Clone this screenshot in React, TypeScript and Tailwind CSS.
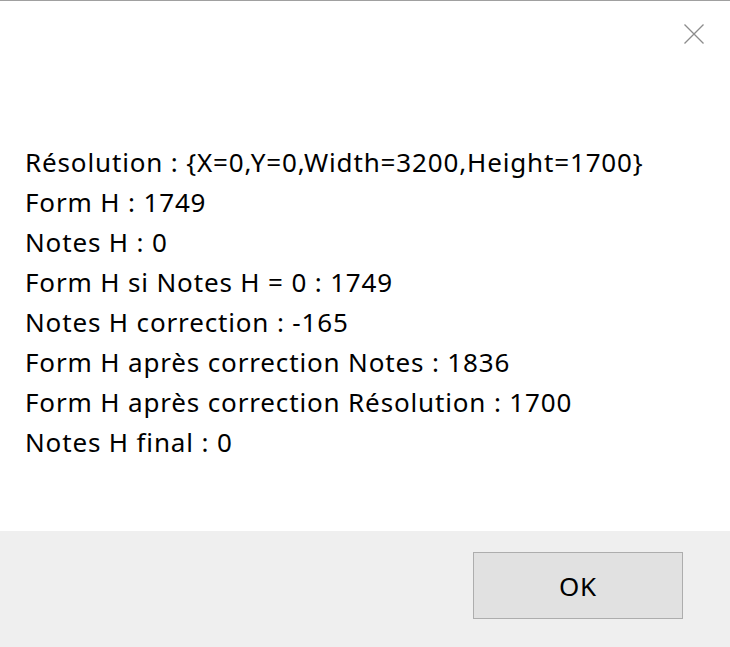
const lines = [
    'Résolution : {X=0,Y=0,Width=3200,Height=1700}',
    'Form H : 1749',
    'Notes H : 0',
    'Form H si Notes H = 0 : 1749',
    'Notes H correction : -165',
    'Form H après correction Notes : 1836',
    'Form H après correction Résolution : 1700',
    'Notes H final : 0',
];

export default function App() {
    return (
        <div className="w-[730px] h-[647px] flex flex-col bg-white border-t border-[#a0a0a0] overflow-hidden" style={{ fontFamily: '"Noto Sans", "Open Sans", sans-serif' }}>
            <div className="h-[530px] flex flex-col">
                <div className="h-[141px] flex justify-end items-start pt-[23px] pr-[26px]">
                    <svg width="20" height="20" viewBox="0 0 20 20" className="text-[#8c8c8c]">
                        <path d="M0.5 0.5 L19.5 19.5 M19.5 0.5 L0.5 19.5" stroke="currentColor" strokeWidth="1.3" fill="none" />
                    </svg>
                </div>
                <div className="pl-[25px] flex flex-col text-[26px] leading-[40px] text-black tracking-[0.85px]">
                    {lines.map((l) => (
                        <p key={l}>{l}</p>
                    ))}
                </div>
            </div>
            <div className="flex-1 bg-[#efefef] flex justify-end items-start pt-[21px] pr-[47px]">
                <button className="w-[210px] h-[67px] pt-[2px] bg-[#e1e1e1] border border-[#adadad] text-[26px] tracking-[0.7px] text-black">OK</button>
            </div>
        </div>
    );
}
